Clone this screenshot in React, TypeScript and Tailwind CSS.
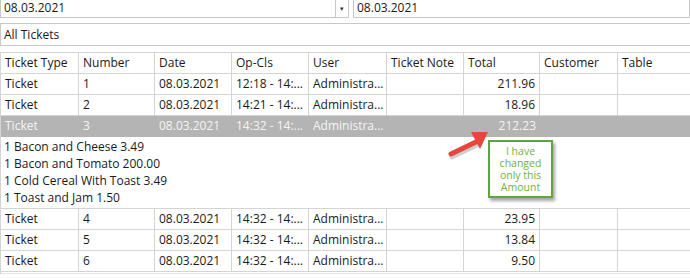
import React from 'react';

const cols = [78, 76, 77, 77, 78, 77, 76, 78, 73];

type Row = { type: string; num: string; date: string; op: string; user: string; total: string };

const topRows: Row[] = [
  { type: 'Ticket', num: '1', date: '08.03.2021', op: '12:18 - 14:...', user: 'Administra...', total: '211.96' },
  { type: 'Ticket', num: '2', date: '08.03.2021', op: '14:21 - 14:...', user: 'Administra...', total: '18.96' },
];

const bottomRows: Row[] = [
  { type: 'Ticket', num: '4', date: '08.03.2021', op: '14:32 - 14:...', user: 'Administra...', total: '23.95' },
  { type: 'Ticket', num: '5', date: '08.03.2021', op: '14:32 - 14:...', user: 'Administra...', total: '13.84' },
  { type: 'Ticket', num: '6', date: '08.03.2021', op: '14:32 - 14:...', user: 'Administra...', total: '9.50' },
];

const orderLines = [
  '1 Bacon and Cheese 3.49',
  '1 Bacon and Tomato 200.00',
  '1 Cold Cereal With Toast 3.49',
  '1 Toast and Jam 1.50',
];

const Cells: React.FC<{ values: string[]; selected?: boolean; header?: boolean }> = ({ values, selected, header }) => (
  <div
    className={`flex h-[21px] border-b ${selected ? 'bg-[#b4b4b4] text-[#f4f4f4] border-[#b4b4b4]' : 'border-[#d4d4d4]'}`}
  >
    {cols.map((w, i) => (
      <div
        key={i}
        style={{ width: w }}
        className={`shrink-0 flex items-center px-[4px] whitespace-nowrap overflow-hidden ${
          selected ? '' : 'border-r border-[#d4d4d4]'
        } ${i === 6 && !header ? 'justify-end' : ''}`}
      >
        {values[i] ?? ''}
      </div>
    ))}
  </div>
);

const toValues = (r: Row) => [r.type, r.num, r.date, r.op, r.user, '', r.total, '', ''];

export default function App() {
  return (
    <div
      className="relative w-[690px] h-[279px] bg-white overflow-hidden text-[12px] text-[#1a1a1a]"
      style={{ fontFamily: '"Open Sans", "Noto Sans", sans-serif' }}
    >
      {/* date pickers */}
      <div className="flex gap-[4px] h-[18px]">
        <div className="flex w-[349px] border border-t-0 border-[#c8c8c8]">
          <div className="flex-1 flex items-center pl-[3px] pb-[1px]">08.03.2021</div>
          <div className="w-[13px] border-l border-[#c8c8c8] flex items-center justify-center text-[7px] leading-none text-[#333]">
            ▾
          </div>
        </div>
        <div className="flex-1 flex items-center pl-[3px] pb-[1px] border border-t-0 border-[#c8c8c8]">
          08.03.2021
        </div>
      </div>

      {/* filter */}
      <div className="mt-[5px] h-[23px] flex items-center pl-[3px] border border-r-0 border-[#c8c8c8]">All Tickets</div>

      {/* grid */}
      <div className="mt-[6px] border-t border-l border-[#d4d4d4]">
        <Cells header values={['Ticket Type', 'Number', 'Date', 'Op-Cls', 'User', 'Ticket Note', 'Total', 'Customer', 'Table']} />
        {topRows.map((r) => (
          <Cells key={r.num} values={toValues(r)} />
        ))}
        <Cells
          selected
          values={['Ticket', '3', '08.03.2021', '14:32 - 14:...', 'Administra...', '', '212.23', '', '']}
        />
        <div className="h-[72px] pl-[3px] pt-[1px] border-b border-[#d4d4d4] flex flex-col">
          {orderLines.map((l) => (
            <div key={l} className="h-[17px] leading-[17px] whitespace-nowrap">
              {l}
            </div>
          ))}
          {/* next line is scrolled under the rows; only its top pixels show */}
          <div className="h-[3px] overflow-hidden">
            <div className="h-[17px] leading-[17px] pt-[2px] whitespace-nowrap">1 Coffee and Biscuit 2.00</div>
          </div>
        </div>
        {bottomRows.map((r) => (
          <Cells key={r.num} values={toValues(r)} />
        ))}
        <div className="h-[2px] border-b border-[#e4e4e4]" />
      </div>

      {/* annotation arrow */}
      <svg className="absolute left-[440px] top-[124px]" width="56" height="38" viewBox="0 0 56 38">
        <path d="M11 31 L38 18" stroke="#00000030" strokeWidth="5" strokeLinecap="round" transform="translate(1,2)" />
        <path d="M11 30 L38 17" stroke="#e8453c" strokeWidth="5" strokeLinecap="round" />
        <path d="M31 8 L48 8 L40 25 Z" fill="#e8453c" />
      </svg>

      {/* annotation callout */}
      <div className="absolute left-[488px] top-[140px] w-[65px] h-[58px] bg-white border-2 border-[#5ea53a] shadow-[2px_3px_3px_rgba(0,0,0,0.35)] flex flex-col items-center justify-center text-[10.5px] leading-[12px] text-[#6db33f]">
        <span>I have</span>
        <span>changed</span>
        <span>only this</span>
        <span>Amount</span>
      </div>
    </div>
  );
}
